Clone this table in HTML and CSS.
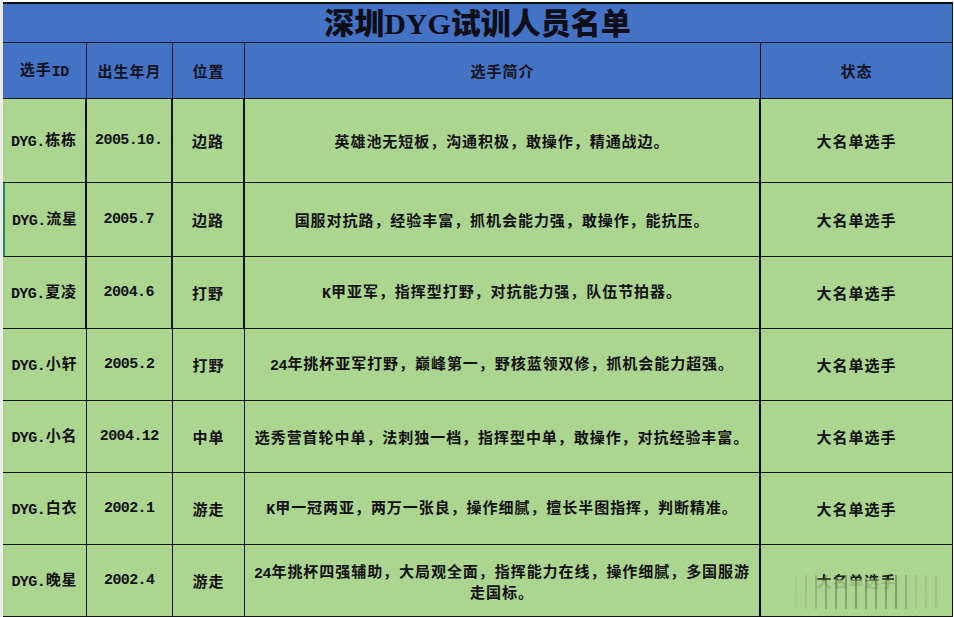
FILE: index.html
```html
<!DOCTYPE html>
<html lang="zh-CN">
<head>
<meta charset="utf-8">
<title>深圳DYG试训人员名单</title>
<link rel="stylesheet" href="styles.css">
</head>
<body>
<div class="page">
  <div class="sheet">
    <div class="title"><span>深圳<span class="ser">DYG</span>试训人员名单</span></div>

    <div class="row head">
      <div class="cell"><span>选手<span class="en">ID</span></span></div>
      <div class="cell">出生年月</div>
      <div class="cell">位置</div>
      <div class="cell">选手简介</div>
      <div class="cell">状态</div>
    </div>

    <div class="row thick">
      <div class="cell"><span><span class="en">DYG.</span>栋栋</span></div>
      <div class="cell"><span class="en">2005.10.</span></div>
      <div class="cell">边路</div>
      <div class="cell desc"><span>英雄池无短板，沟通积极，敢操作，精通战边。</span></div>
      <div class="cell">大名单选手</div>
    </div>

    <div class="row thick">
      <div class="cell sel"><span><span class="en">DYG.</span>流星</span></div>
      <div class="cell"><span class="en">2005.7</span></div>
      <div class="cell">边路</div>
      <div class="cell desc"><span>国服对抗路，经验丰富，抓机会能力强，敢操作，能抗压。</span></div>
      <div class="cell">大名单选手</div>
    </div>

    <div class="row thick">
      <div class="cell"><span><span class="en">DYG.</span>夏凌</span></div>
      <div class="cell"><span class="en">2004.6</span></div>
      <div class="cell">打野</div>
      <div class="cell desc"><span><span class="en">K</span>甲亚军，指挥型打野，对抗能力强，队伍节拍器。</span></div>
      <div class="cell">大名单选手</div>
    </div>

    <div class="row">
      <div class="cell"><span><span class="en">DYG.</span>小轩</span></div>
      <div class="cell"><span class="en">2005.2</span></div>
      <div class="cell">打野</div>
      <div class="cell desc"><span><span class="en">24</span>年挑杯亚军打野，巅峰第一，野核蓝领双修，抓机会能力超强。</span></div>
      <div class="cell">大名单选手</div>
    </div>

    <div class="row">
      <div class="cell"><span><span class="en">DYG.</span>小名</span></div>
      <div class="cell"><span class="en">2004.12</span></div>
      <div class="cell">中单</div>
      <div class="cell desc"><span>选秀营首轮中单，法刺独一档，指挥型中单，敢操作，对抗经验丰富。</span></div>
      <div class="cell">大名单选手</div>
    </div>

    <div class="row">
      <div class="cell"><span><span class="en">DYG.</span>白衣</span></div>
      <div class="cell"><span class="en">2002.1</span></div>
      <div class="cell">游走</div>
      <div class="cell desc"><span><span class="en">K</span>甲一冠两亚，两万一张良，操作细腻，擅长半图指挥，判断精准。</span></div>
      <div class="cell">大名单选手</div>
    </div>

    <div class="row last">
      <div class="cell"><span><span class="en">DYG.</span>晚星</span></div>
      <div class="cell"><span class="en">2002.4</span></div>
      <div class="cell">游走</div>
      <div class="cell desc"><span><span class="en">24</span>年挑杯四强辅助，大局观全面，指挥能力在线，操作细腻，多国服游走国标。</span></div>
      <div class="cell status-wm"><span class="wm-text">大名单选手</span><span class="wm"></span></div>
    </div>
  </div>
</div>
</body>
</html>
```

FILE: styles.css
```css
html, body {
  margin: 0;
  padding: 0;
  background: #ffffff;
}

.page {
  width: 954px;
  height: 617px;
  box-sizing: border-box;
  padding: 2px 1px 0 0;
  background: linear-gradient(to right, #ececec 0, #ececec 3px, #ffffff 3px);
  overflow: hidden;
}

.sheet {
  margin-left: 3px;
  width: 950px;
  display: grid;
  grid-template-columns: 84px 86px 72px 516px 192px;
  grid-template-rows: 39px 56px 84px 74px 72px 72px 72px 72px 72px;
  border-top: 2px solid #0c0c0c;
  color: #111111;
  font-family: "Noto Sans CJK SC", sans-serif;
  font-weight: 700;
  font-size: 15px;
  letter-spacing: 0.95px;
}

.title {
  grid-column: 1 / -1;
  background: #4472c4;
  border-bottom: 1px solid #101820;
  border-right: 1px solid #101820;
  display: flex;
  align-items: center;
  justify-content: center;
  font-family: "Noto Sans CJK SC", sans-serif;
  font-weight: 900;
  font-size: 30px;
  letter-spacing: 0;
  color: #0e0e18;
  line-height: 1;
  padding-bottom: 2px;
  box-sizing: border-box;
}

.title .ser {
  font-family: "Liberation Serif", serif;
  font-weight: 700;
  font-size: 30px;
}

.row {
  display: contents;
}

.cell {
  box-sizing: border-box;
  display: flex;
  align-items: center;
  justify-content: center;
  text-align: center;
  background: #acd590;
  border-right: 1px solid #141414;
  border-bottom: 1px solid #141414;
  line-height: 17px;
  white-space: nowrap;
}

.head .cell {
  background: #4472c4;
  color: #10121e;
  border-right-color: #101828;
  border-bottom-color: #101828;
}

.thick .cell {
  border-right-width: 2px;
}

.row .cell:nth-child(4) {
  border-right-width: 2px;
  border-right-color: #0a0a0a;
}

.head .cell:nth-child(4) {
  border-right-width: 1px;
}

.row .cell:nth-child(5) {
  border-right-width: 1px;
}

.desc {
  white-space: normal;
  padding: 0 5px;
}

.sel {
  border-left: 2px solid #1f8f64;
}

.en {
  font-family: "Liberation Mono", monospace;
  font-size: 15px;
  letter-spacing: -0.6px;
  font-weight: 700;
  vertical-align: -1px;
  margin-right: 0.6px;
}

.status-wm {
  position: relative;
  overflow: hidden;
}

.wm-text {
  color: #1a1a1a;
  -webkit-mask-image: linear-gradient(to bottom, #000 0, #000 40%, rgba(0,0,0,0.15) 55%, rgba(0,0,0,0.15) 100%);
  mask-image: linear-gradient(to bottom, #000 0, #000 40%, rgba(0,0,0,0.15) 55%, rgba(0,0,0,0.15) 100%);
}

.wm {
  position: absolute;
  left: 30px;
  top: 30px;
  width: 154px;
  height: 34px;
  background:
    linear-gradient(to bottom, rgba(172,213,144,0) 0, rgba(172,213,144,0.2) 100%),
    repeating-linear-gradient(to right,
      rgba(40,50,30,0) 0, rgba(40,50,30,0) 4px,
      rgba(40,50,30,0.35) 4px, rgba(40,50,30,0.35) 6px,
      rgba(40,50,30,0) 6px, rgba(40,50,30,0) 10px);
  -webkit-mask-image: linear-gradient(to right, transparent 0, rgba(0,0,0,0.4) 12%, #000 25%, #000 70%, rgba(0,0,0,0.3) 80%, rgba(0,0,0,0.25) 100%);
  mask-image: linear-gradient(to right, transparent 0, rgba(0,0,0,0.4) 12%, #000 25%, #000 70%, rgba(0,0,0,0.3) 80%, rgba(0,0,0,0.25) 100%);
  filter: blur(0.6px);
}
```
